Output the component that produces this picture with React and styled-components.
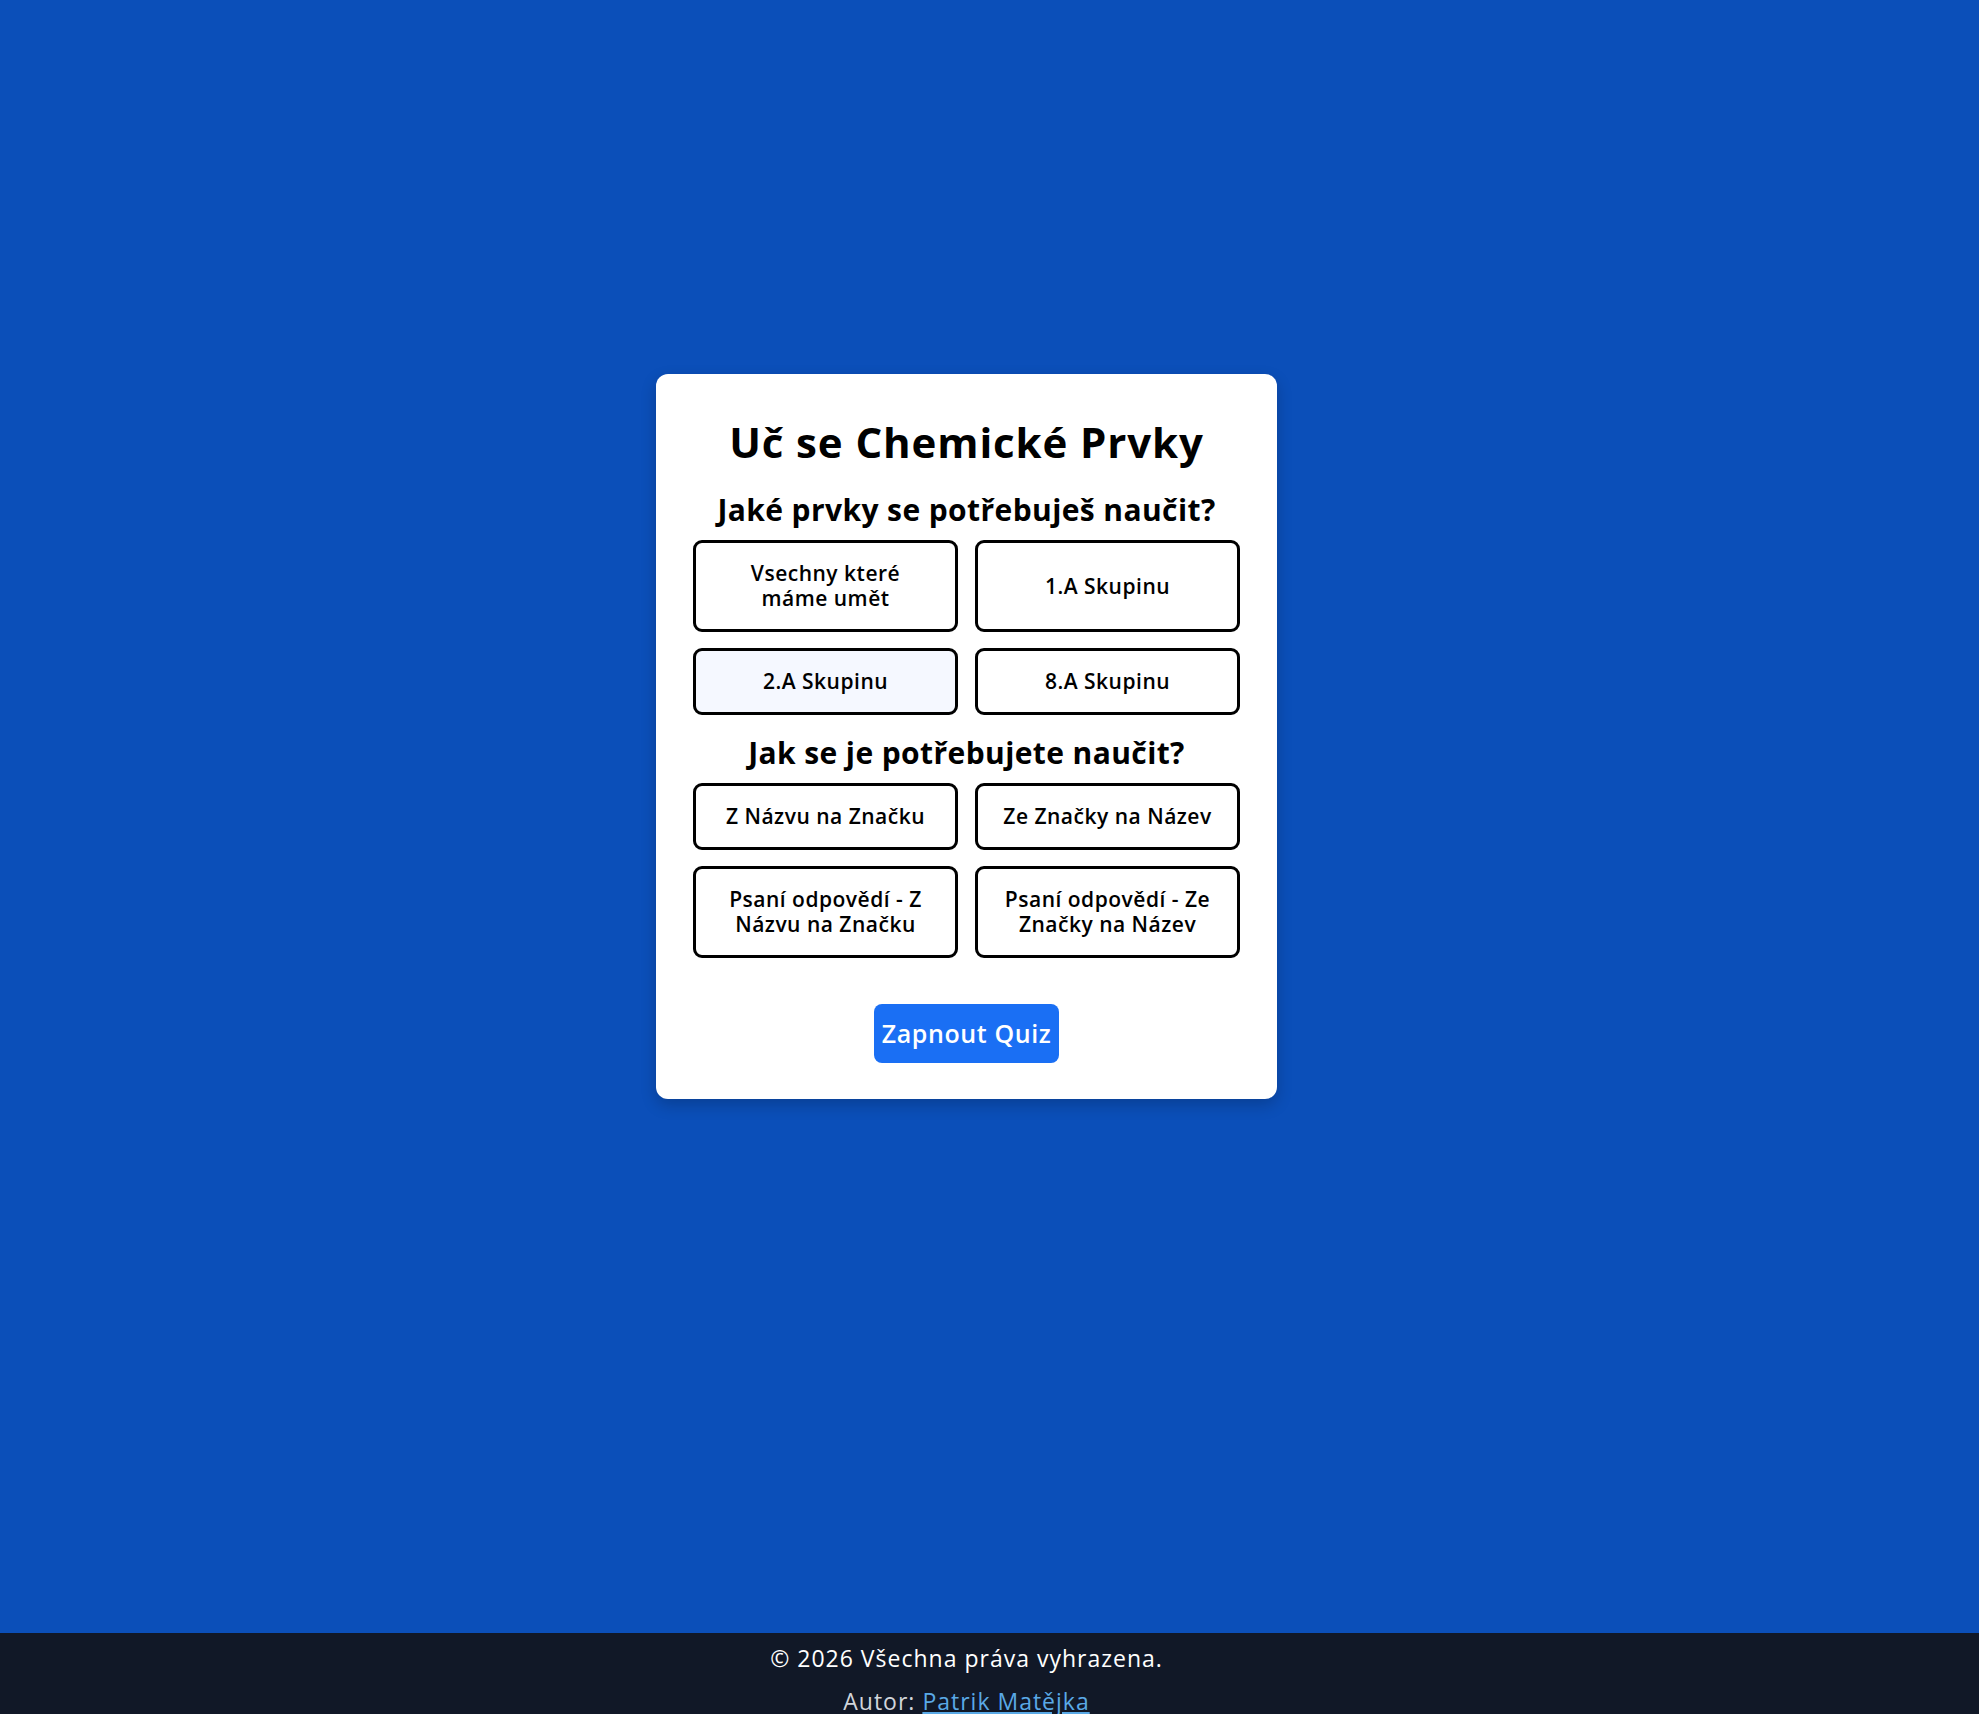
import { useState } from "react";
import styled, { createGlobalStyle } from "styled-components";

const GlobalStyle = createGlobalStyle`
  body {
    margin: 0;
    background: #0b4fb9;
    font-family: "Open Sans", "Noto Sans", sans-serif;
  }
`;

const groups = [
  { id: "all", label: "Vsechny které máme umět", narrow: true },
  { id: "1a", label: "1.A Skupinu" },
  { id: "2a", label: "2.A Skupinu" },
  { id: "8a", label: "8.A Skupinu" },
];

const modes = [
  { id: "name-symbol", label: "Z Názvu na Značku" },
  { id: "symbol-name", label: "Ze Značky na Název" },
  { id: "write-name-symbol", label: "Psaní odpovědí - Z Názvu na Značku" },
  { id: "write-symbol-name", label: "Psaní odpovědí - Ze Značky na Název" },
];

export default function App() {
  const [group, setGroup] = useState(null);
  const [mode, setMode] = useState(null);
  const [hovered] = useState("2a");

  return (
    <>
      <GlobalStyle />
      <Main>
        <Card>
          <Title>Uč se Chemické Prvky</Title>

          <Question>Jaké prvky se potřebuješ naučit?</Question>
          <OptionGrid>
            {groups.map((g) => (
              <OptionButton
                key={g.id}
                $active={group === g.id}
                $hover={hovered === g.id}
                onClick={() => setGroup(g.id)}
              >
                <OptionLabel $narrow={g.narrow}>{g.label}</OptionLabel>
              </OptionButton>
            ))}
          </OptionGrid>

          <Question>Jak se je potřebujete naučit?</Question>
          <OptionGrid>
            {modes.map((m) => (
              <OptionButton
                key={m.id}
                $active={mode === m.id}
                onClick={() => setMode(m.id)}
              >
                <OptionLabel>{m.label}</OptionLabel>
              </OptionButton>
            ))}
          </OptionGrid>

          <StartButton>Zapnout Quiz</StartButton>
        </Card>
      </Main>

      <Footer>
        <FooterLine>© 2026 Všechna práva vyhrazena.</FooterLine>
        <FooterLine $muted>
          Autor: <AuthorLink href="#">Patrik Matějka</AuthorLink>
        </FooterLine>
      </Footer>
    </>
  );
}

const Main = styled.main`
  box-sizing: border-box;
  height: 1633px;
  padding: 374px 46px 0 0;
  display: flex;
  justify-content: center;
  align-items: flex-start;
`;

const Card = styled.section`
  box-sizing: border-box;
  width: 621px;
  padding: 38px 37px 36px;
  background: #fff;
  border-radius: 12px;
  box-shadow: 0 6px 16px #00000033;
  display: flex;
  flex-direction: column;
  align-items: center;
  text-align: center;
`;

const Title = styled.h1`
  margin: 0;
  font-size: 42px;
  line-height: 60px;
  font-weight: 700;
  letter-spacing: 0.9px;
  color: #000;
`;

const Question = styled.h2`
  margin: 20px 0 12px;
  font-size: 30px;
  line-height: 36px;
  font-weight: 700;
  letter-spacing: 0.4px;
  color: #000;
`;

const OptionGrid = styled.div`
  width: 100%;
  display: grid;
  grid-template-columns: 1fr 1fr;
  column-gap: 17px;
  row-gap: 16px;
`;

const OptionButton = styled.button`
  box-sizing: border-box;
  padding: 18px 12px;
  border: 3px solid #000;
  border-radius: 9px;
  background: ${(p) => (p.$active ? "#e6efff" : p.$hover ? "#f5f8ff" : "#fff")};
  color: #000;
  font-family: inherit;
  font-size: 21px;
  font-weight: 600;
  line-height: 25px;
  letter-spacing: 0.5px;
  cursor: pointer;
`;

const OptionLabel = styled.span`
  display: block;
  max-width: ${(p) => (p.$narrow ? "200px" : "232px")};
  margin: 0 auto;
`;

const StartButton = styled.button`
  margin-top: 46px;
  padding: 15px 8px;
  border: none;
  border-radius: 8px;
  background: #1a6ff4;
  color: #fff;
  font-family: inherit;
  font-size: 25px;
  font-weight: 600;
  line-height: 29px;
  letter-spacing: 0.6px;
  cursor: pointer;
`;

const Footer = styled.footer`
  box-sizing: border-box;
  background: #111827;
  padding: 13px 46px 20px 0;
  text-align: center;
`;

const FooterLine = styled.p`
  margin: 0 0 19px;
  font-size: 23px;
  line-height: 24px;
  letter-spacing: 1px;
  color: ${(p) => (p.$muted ? "#d1d5db" : "#fff")};
`;

const AuthorLink = styled.a`
  color: #5aa9e6;
  text-decoration: underline;
`;
